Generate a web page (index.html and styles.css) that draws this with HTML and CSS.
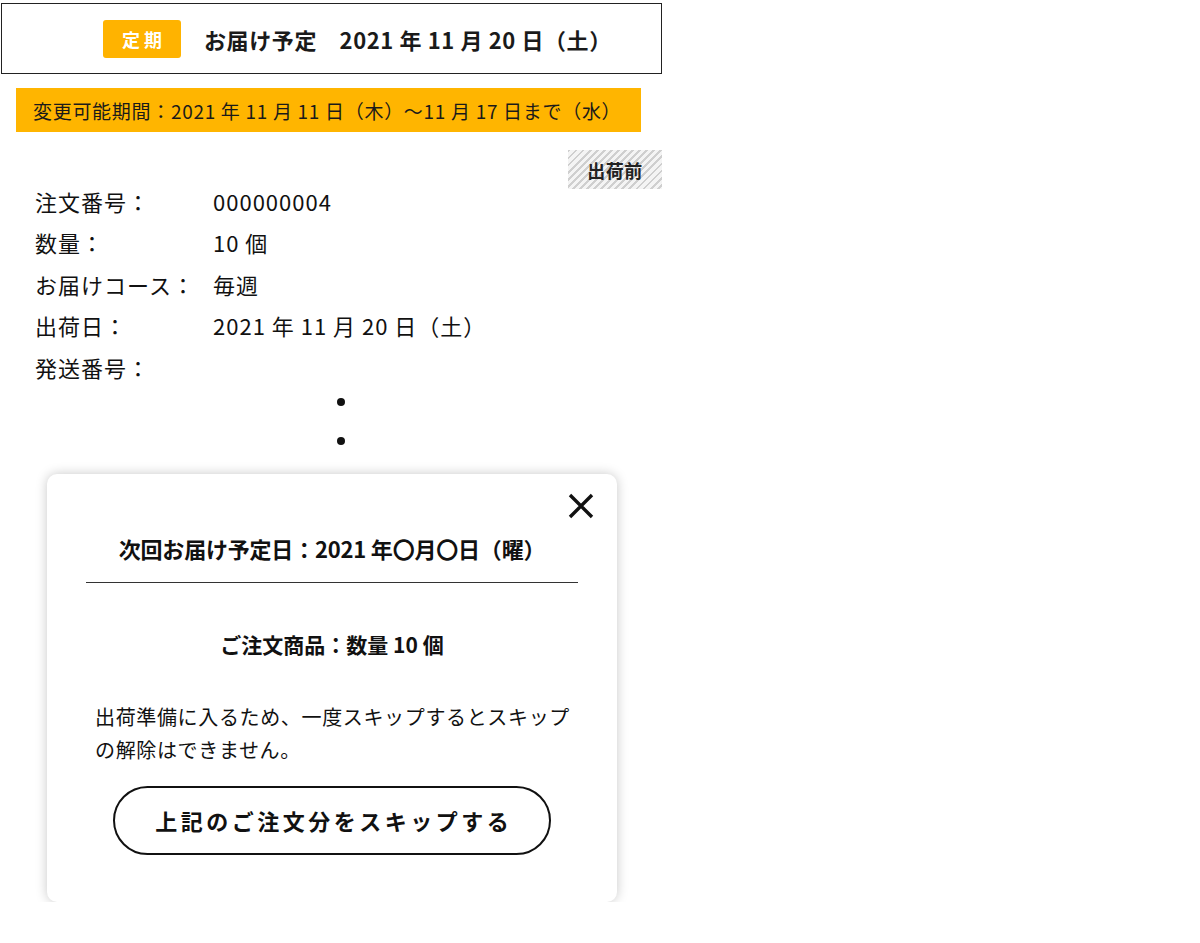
FILE: index.html
```html
<!DOCTYPE html>
<html lang="ja">
<head>
<meta charset="utf-8">
<link rel="stylesheet" href="styles.css">
</head>
<body>
<div class="page">
  <div class="delivery-head">
    <span class="tag">定期</span>
    <span class="head-text">お届け予定　2021 年 11 月 20 日（土）</span>
  </div>
  <div class="period">変更可能期間：2021 年 11 月 11 日（木）～11 月 17 日まで（水）</div>
  <div class="status-row"><span class="status">出荷前</span></div>
  <dl class="info">
    <div class="info-row"><dt>注文番号：</dt><dd>000000004</dd></div>
    <div class="info-row"><dt>数量：</dt><dd>10 個</dd></div>
    <div class="info-row"><dt>お届けコース：</dt><dd>毎週</dd></div>
    <div class="info-row"><dt>出荷日：</dt><dd>2021 年 11 月 20 日（土）</dd></div>
    <div class="info-row"><dt>発送番号：</dt><dd></dd></div>
  </dl>
  <div class="dots"><span class="dot"></span><span class="dot"></span></div>
  <div class="modal">
    <div class="modal-close">
      <svg width="26" height="26" viewBox="0 0 26 26"><path d="M2 2 L24 24 M24 2 L2 24" stroke="#111" stroke-width="3.4" fill="none"/></svg>
    </div>
    <div class="modal-title">次回お届け予定日：2021 年〇月〇日（曜）</div>
    <hr class="modal-rule">
    <div class="modal-item">ご注文商品：数量 10 個</div>
    <p class="modal-note">出荷準備に入るため、一度スキップするとスキップの解除はできません。</p>
    <div class="modal-actions"><button class="skip-btn">上記のご注文分をスキップする</button></div>
  </div>
</div>
</body>
</html>
```
FILE: styles.css
```css
html, body {
  margin: 0;
  padding: 0;
  background: #fff;
}
body {
  font-family: "Noto Sans CJK JP", "Noto Sans", sans-serif;
  color: #111;
}
.page {
  width: 661px;
  padding: 3px 0 0 1px;
}
.delivery-head {
  box-sizing: border-box;
  height: 71px;
  border: 1px solid #222;
  display: flex;
  align-items: center;
  padding-left: 101px;
}
.tag {
  display: inline-flex;
  align-items: center;
  justify-content: center;
  width: 78px;
  height: 38px;
  background: #ffb300;
  color: #fff;
  border-radius: 3px;
  font-weight: 700;
  font-size: 18px;
  letter-spacing: 4px;
  text-indent: 4px;
}
.head-text {
  margin-left: 23px;
  font-size: 22px;
  font-weight: 700;
  letter-spacing: 0.6px;
  color: #1a1a1a;
}
.period {
  margin: 14px 0 0 15px;
  width: 625px;
  height: 44px;
  box-sizing: border-box;
  background: #ffb500;
  display: flex;
  align-items: center;
  padding-left: 17px;
  font-size: 19px;
  color: #1a1a1a;
  letter-spacing: 0.7px;
  white-space: nowrap;
}
.status-row {
  display: flex;
  justify-content: flex-end;
  margin-top: 18px;
}
.status {
  display: inline-flex;
  align-items: center;
  justify-content: center;
  width: 94px;
  height: 39px;
  font-size: 18px;
  font-weight: 700;
  letter-spacing: 0.5px;
  color: #222;
  background: repeating-linear-gradient(135deg, #cfcfcf 0 2px, #f4f4f4 2px 5px);
}
.info {
  margin: -9px 0 0 34px;
}
.info-row {
  display: flex;
  height: 41.5px;
  align-items: center;
  font-size: 22px;
  letter-spacing: 1px;
}
.info-row dt {
  width: 178px;
}
.info-row dd {
  margin: 0;
}
.dots {
  display: flex;
  flex-direction: column;
  align-items: center;
  width: 680px;
  gap: 31px;
  margin-top: 10px;
}
.dot {
  width: 8px;
  height: 8px;
  border-radius: 50%;
  background: #111;
}
.modal {
  position: relative;
  box-sizing: border-box;
  width: 570px;
  height: 428px;
  margin: 29px 0 0 46px;
  background: #fff;
  border-radius: 10px;
  box-shadow: 0 0 12px rgba(0,0,0,0.22);
  padding: 56px 39px 0;
}
.modal-close {
  position: absolute;
  top: 19px;
  right: 23px;
  width: 26px;
  height: 26px;
}
.modal-close svg { display: block; }
.modal-title {
  text-align: center;
  font-size: 22px;
  font-weight: 700;
  line-height: 36px;
  letter-spacing: -0.2px;
}
.modal-rule {
  border: 0;
  border-top: 1px solid #333;
  margin: 16px 0 0;
}
.modal-item {
  text-align: center;
  font-size: 21px;
  font-weight: 700;
  margin-top: 44px;
  line-height: 34px;
}
.modal-note {
  margin: 39.5px 0 0 9px;
  width: 482px;
  font-size: 20px;
  line-height: 33px;
  letter-spacing: 0.65px;
}
.modal-actions {
  display: flex;
  justify-content: center;
  margin-top: 19.5px;
}
.skip-btn {
  box-sizing: border-box;
  width: 438px;
  height: 69px;
  border: 2.5px solid #111;
  border-radius: 35px;
  background: #fff;
  font-family: inherit;
  font-size: 22px;
  font-weight: 700;
  color: #111;
  letter-spacing: 3.5px;
  text-indent: 3.5px;
}
```
